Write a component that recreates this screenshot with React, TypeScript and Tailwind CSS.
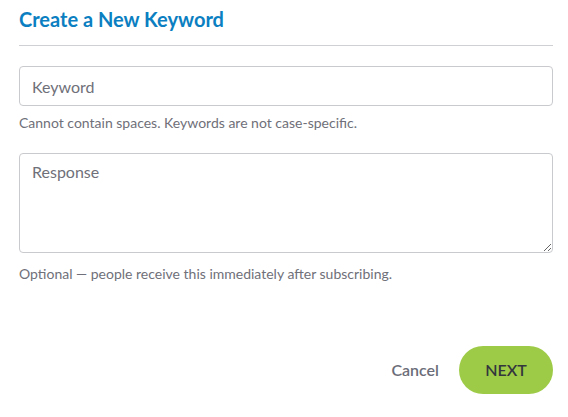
import React from "react";

export default function App() {
  return (
    <div className="w-[568px] h-[417px] bg-white px-[19px] pt-[6px]" style={{ fontFamily: "Lato, 'Open Sans', sans-serif" }}>
      <h1 className="text-[20px] leading-[26px] font-bold text-[#0b7fc1]">Create a New Keyword</h1>
      <div className="mt-[13px] h-px bg-[#cfd0d4] w-[534px]" />
      <input
        className="mt-[20px] block w-[534px] h-[40px] rounded-[4px] border border-[#c9cace] px-[12px] text-[16px] text-[#333] placeholder:text-[#6f7079] outline-none"
        placeholder="Keyword"
      />
      <p className="mt-[8px] text-[14px] leading-[17px] text-[#6f7079]">Cannot contain spaces. Keywords are not case-specific.</p>
      <textarea
        className="mt-[22px] block w-[534px] h-[100px] rounded-[4px] border border-[#c9cace] px-[12px] pt-[7px] text-[16px] leading-[22px] text-[#333] placeholder:text-[#6f7079] outline-none"
        placeholder="Response"
      />
      <p className="mt-[12px] text-[14px] leading-[17px] text-[#6f7079]">Optional — people receive this immediately after subscribing.</p>
      <div className="mt-[64px] flex justify-end items-center w-[534px]">
        <button className="text-[16px] font-semibold text-[#6b6d78] mr-[20px]">Cancel</button>
        <button className="w-[94px] h-[48px] rounded-full bg-[#9ecb47] text-[16px] font-semibold text-[#33363d]">NEXT</button>
      </div>
    </div>
  );
}
